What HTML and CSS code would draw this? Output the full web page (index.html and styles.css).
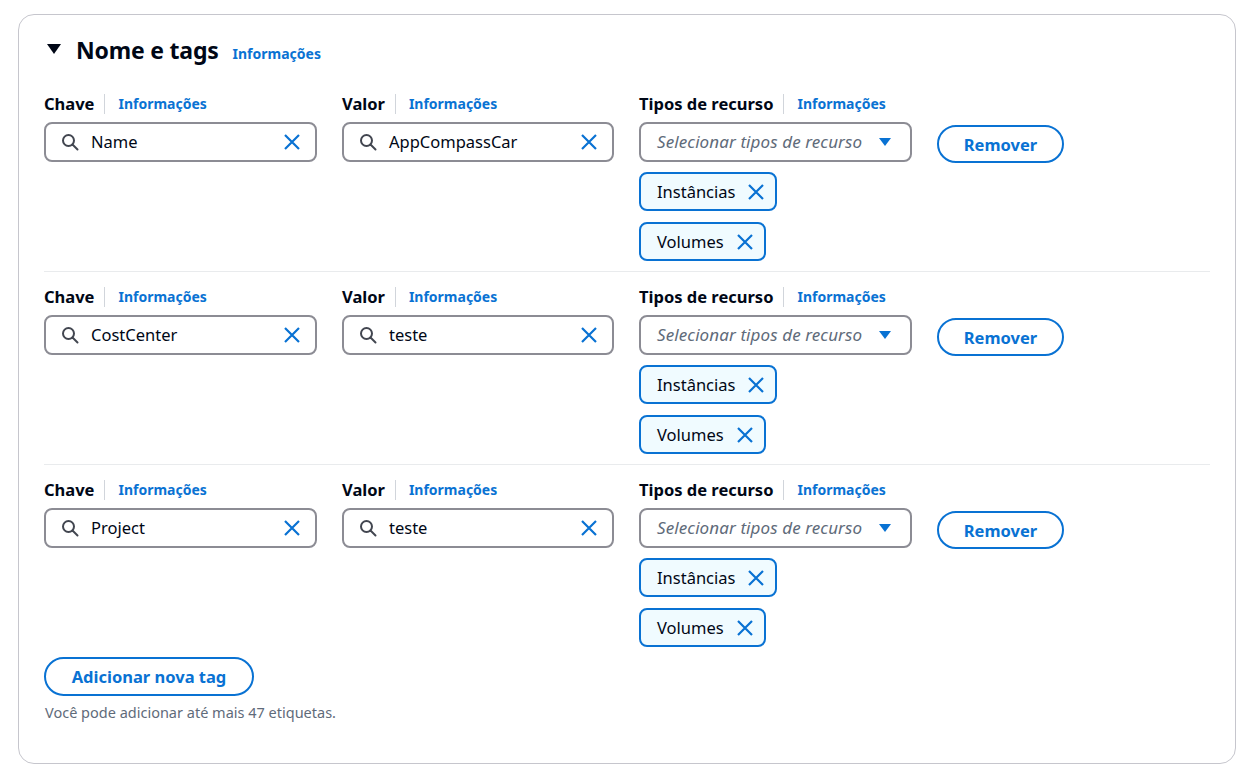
FILE: index.html
```html
<!DOCTYPE html>
<html lang="pt">
<head>
<meta charset="utf-8">
<title>Nome e tags</title>
<link rel="stylesheet" href="styles.css">
</head>
<body>
<div class="panel">
  <div class="heading">
    <svg class="caret-down" width="16" height="12" viewBox="0 0 16 12"><path d="M1 1h14L8 11z" fill="#000716"/></svg>
    <h2 class="title">Nome e tags</h2>
    <a class="info info-lg">Informações</a>
  </div>

  <div class="tag-row">
    <div class="field">
      <div class="label"><span class="label-text">Chave</span><span class="sep"></span><a class="info">Informações</a></div>
      <div class="input"><svg class="search" width="18" height="18" viewBox="0 0 18 18"><circle cx="7.5" cy="7.5" r="5.5" fill="none" stroke="#424650" stroke-width="2"/><path d="M11.5 11.5l5 5" stroke="#424650" stroke-width="2" stroke-linecap="round"/></svg><span class="value">Name</span><svg class="clear" width="18" height="18" viewBox="0 0 18 18"><path d="M2 2l14 14M16 2L2 16" stroke="#0972d3" stroke-width="2.2"/></svg></div>
    </div>
    <div class="field">
      <div class="label"><span class="label-text">Valor</span><span class="sep"></span><a class="info">Informações</a></div>
      <div class="input"><svg class="search" width="18" height="18" viewBox="0 0 18 18"><circle cx="7.5" cy="7.5" r="5.5" fill="none" stroke="#424650" stroke-width="2"/><path d="M11.5 11.5l5 5" stroke="#424650" stroke-width="2" stroke-linecap="round"/></svg><span class="value">AppCompassCar</span><svg class="clear" width="18" height="18" viewBox="0 0 18 18"><path d="M2 2l14 14M16 2L2 16" stroke="#0972d3" stroke-width="2.2"/></svg></div>
    </div>
    <div class="field">
      <div class="label"><span class="label-text">Tipos de recurso</span><span class="sep"></span><a class="info">Informações</a></div>
      <div class="select"><span class="placeholder">Selecionar tipos de recurso</span><svg class="dd" width="14" height="10" viewBox="0 0 14 10"><path d="M1 1h12L7 9z" fill="#0972d3"/></svg></div>
      <div class="token"><span>Instâncias</span><svg class="tx" width="18" height="18" viewBox="0 0 18 18"><path d="M2 2l14 14M16 2L2 16" stroke="#0972d3" stroke-width="2.2"/></svg></div>
      <div class="token"><span>Volumes</span><svg class="tx" width="18" height="18" viewBox="0 0 18 18"><path d="M2 2l14 14M16 2L2 16" stroke="#0972d3" stroke-width="2.2"/></svg></div>
    </div>
    <div class="action"><button class="btn btn-remove">Remover</button></div>
  </div>

  <div class="tag-row">
    <div class="field">
      <div class="label"><span class="label-text">Chave</span><span class="sep"></span><a class="info">Informações</a></div>
      <div class="input"><svg class="search" width="18" height="18" viewBox="0 0 18 18"><circle cx="7.5" cy="7.5" r="5.5" fill="none" stroke="#424650" stroke-width="2"/><path d="M11.5 11.5l5 5" stroke="#424650" stroke-width="2" stroke-linecap="round"/></svg><span class="value">CostCenter</span><svg class="clear" width="18" height="18" viewBox="0 0 18 18"><path d="M2 2l14 14M16 2L2 16" stroke="#0972d3" stroke-width="2.2"/></svg></div>
    </div>
    <div class="field">
      <div class="label"><span class="label-text">Valor</span><span class="sep"></span><a class="info">Informações</a></div>
      <div class="input"><svg class="search" width="18" height="18" viewBox="0 0 18 18"><circle cx="7.5" cy="7.5" r="5.5" fill="none" stroke="#424650" stroke-width="2"/><path d="M11.5 11.5l5 5" stroke="#424650" stroke-width="2" stroke-linecap="round"/></svg><span class="value">teste</span><svg class="clear" width="18" height="18" viewBox="0 0 18 18"><path d="M2 2l14 14M16 2L2 16" stroke="#0972d3" stroke-width="2.2"/></svg></div>
    </div>
    <div class="field">
      <div class="label"><span class="label-text">Tipos de recurso</span><span class="sep"></span><a class="info">Informações</a></div>
      <div class="select"><span class="placeholder">Selecionar tipos de recurso</span><svg class="dd" width="14" height="10" viewBox="0 0 14 10"><path d="M1 1h12L7 9z" fill="#0972d3"/></svg></div>
      <div class="token"><span>Instâncias</span><svg class="tx" width="18" height="18" viewBox="0 0 18 18"><path d="M2 2l14 14M16 2L2 16" stroke="#0972d3" stroke-width="2.2"/></svg></div>
      <div class="token"><span>Volumes</span><svg class="tx" width="18" height="18" viewBox="0 0 18 18"><path d="M2 2l14 14M16 2L2 16" stroke="#0972d3" stroke-width="2.2"/></svg></div>
    </div>
    <div class="action"><button class="btn btn-remove">Remover</button></div>
  </div>

  <div class="tag-row last">
    <div class="field">
      <div class="label"><span class="label-text">Chave</span><span class="sep"></span><a class="info">Informações</a></div>
      <div class="input"><svg class="search" width="18" height="18" viewBox="0 0 18 18"><circle cx="7.5" cy="7.5" r="5.5" fill="none" stroke="#424650" stroke-width="2"/><path d="M11.5 11.5l5 5" stroke="#424650" stroke-width="2" stroke-linecap="round"/></svg><span class="value">Project</span><svg class="clear" width="18" height="18" viewBox="0 0 18 18"><path d="M2 2l14 14M16 2L2 16" stroke="#0972d3" stroke-width="2.2"/></svg></div>
    </div>
    <div class="field">
      <div class="label"><span class="label-text">Valor</span><span class="sep"></span><a class="info">Informações</a></div>
      <div class="input"><svg class="search" width="18" height="18" viewBox="0 0 18 18"><circle cx="7.5" cy="7.5" r="5.5" fill="none" stroke="#424650" stroke-width="2"/><path d="M11.5 11.5l5 5" stroke="#424650" stroke-width="2" stroke-linecap="round"/></svg><span class="value">teste</span><svg class="clear" width="18" height="18" viewBox="0 0 18 18"><path d="M2 2l14 14M16 2L2 16" stroke="#0972d3" stroke-width="2.2"/></svg></div>
    </div>
    <div class="field">
      <div class="label"><span class="label-text">Tipos de recurso</span><span class="sep"></span><a class="info">Informações</a></div>
      <div class="select"><span class="placeholder">Selecionar tipos de recurso</span><svg class="dd" width="14" height="10" viewBox="0 0 14 10"><path d="M1 1h12L7 9z" fill="#0972d3"/></svg></div>
      <div class="token"><span>Instâncias</span><svg class="tx" width="18" height="18" viewBox="0 0 18 18"><path d="M2 2l14 14M16 2L2 16" stroke="#0972d3" stroke-width="2.2"/></svg></div>
      <div class="token"><span>Volumes</span><svg class="tx" width="18" height="18" viewBox="0 0 18 18"><path d="M2 2l14 14M16 2L2 16" stroke="#0972d3" stroke-width="2.2"/></svg></div>
    </div>
    <div class="action"><button class="btn btn-remove">Remover</button></div>
  </div>

  <div class="footer">
    <button class="btn btn-add">Adicionar nova tag</button>
    <p class="hint">Você pode adicionar até mais 47 etiquetas.</p>
  </div>
</div>
</body>
</html>
```

FILE: styles.css
```css
* { box-sizing: border-box; }
body {
  margin: 0;
  background: #ffffff;
  font-family: "Noto Sans", "Open Sans", sans-serif;
  color: #000716;
}
.panel {
  margin: 14px 18px 0 18px;
  height: 750px;
  border: 1px solid #c6c6cd;
  border-radius: 16px;
  padding: 19px 25px 0 25px;
}
.heading {
  display: flex;
  align-items: center;
  height: 32px;
  margin-bottom: 28px;
}
.caret-down { margin-left: 2px; margin-right: 14px; margin-top: -2px; }
.title {
  margin: 0;
  font-size: 23px;
  font-weight: 700;
  line-height: 32px;
  letter-spacing: -0.2px;
}
.info {
  color: #0972d3;
  font-weight: 700;
  font-size: 14px;
  text-decoration: none;
  line-height: 20px;
}
.info-lg { margin-left: 14px; margin-top: 7px; }

.tag-row {
  display: grid;
  grid-template-columns: 273px 272px 273px auto;
  column-gap: 25px;
  padding-bottom: 10px;
  border-bottom: 1px solid #e9ebed;
  margin-bottom: 15px;
}
.tag-row.last { border-bottom: none; margin-bottom: 0; padding-bottom: 10px; }
.field { display: flex; flex-direction: column; align-items: flex-start; }
.label {
  display: flex;
  align-items: center;
  height: 20px;
  margin-bottom: 8px;
}
.label-text { font-size: 16.5px; font-weight: 700; line-height: 20px; }
.sep {
  width: 1px;
  height: 20px;
  background: #d1d5db;
  margin: 0 13px 0 10px;
}
.input, .select {
  width: 100%;
  height: 40px;
  border: 2px solid #8c8c94;
  border-radius: 8px;
  display: flex;
  align-items: center;
  padding: 0 14px 0 15px;
}
.search { flex: none; margin-right: 12px; }
.value { flex: 1; font-size: 16.5px; line-height: 20px; }
.clear { flex: none; }
.select { padding: 0 18px 0 16px; }
.placeholder {
  flex: 1;
  font-style: italic;
  color: #5f6b7a;
  font-size: 17px;
  line-height: 20px;
  letter-spacing: 0.1px;
}
.dd { flex: none; }
.token {
  display: flex;
  align-items: center;
  height: 39px;
  margin-top: 10px;
  border: 2px solid #0972d3;
  border-radius: 8px;
  background: #f0fbff;
  padding: 0 10px 0 16px;
  font-size: 16.5px;
  line-height: 20px;
}
.token + .token { margin-top: 11px; }
.tx { margin-left: 12px; }
.action { padding-top: 31px; }
.btn {
  font-family: "Noto Sans", "Open Sans", sans-serif;
  background: #ffffff;
  border: 2px solid #0972d3;
  color: #0972d3;
  font-weight: 700;
  font-size: 16.5px;
  border-radius: 20px;
  cursor: pointer;
}
.btn-remove { width: 127px; height: 38px; padding: 0; }
.btn-add { width: 210px; height: 39px; padding: 0; }
.footer { padding-top: 0; }
.hint {
  margin: 6px 0 0 1px;
  font-size: 14.5px;
  line-height: 20px;
  color: #5f6b7a;
}
```
